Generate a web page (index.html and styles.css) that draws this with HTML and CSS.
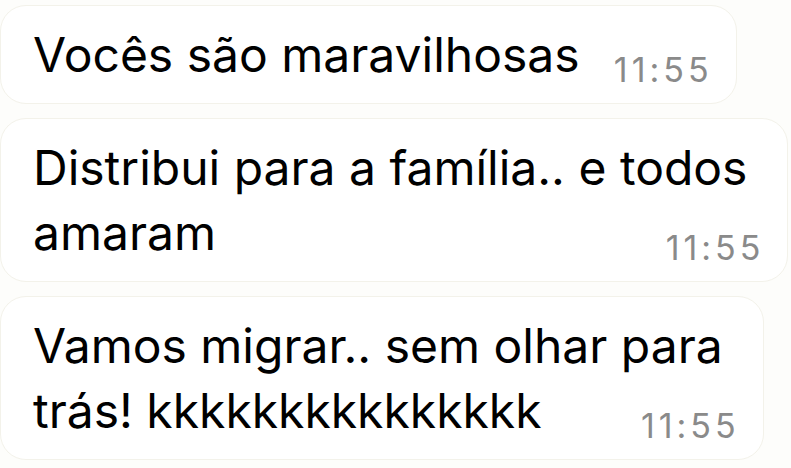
FILE: index.html
```html
<!DOCTYPE html>
<html lang="pt-BR">
<head>
    <meta charset="UTF-8">
    <meta name="viewport" content="width=device-width, initial-scale=1.0">
    <title>Conversa</title>
    <link rel="stylesheet" href="styles.css">
</head>
<body>
    <div class="chat">
        <div class="bubble">
            <p class="text">Vocês são maravilhosas<span class="spacer"></span></p>
            <span class="time">11:55</span>
        </div>
        <div class="bubble">
            <p class="text">Distribui para a família.. e todos<br>amaram<span class="spacer"></span></p>
            <span class="time">11:55</span>
        </div>
        <div class="bubble">
            <p class="text">Vamos migrar.. sem olhar para<br>trás! kkkkkkkkkkkkkkk<span class="spacer"></span></p>
            <span class="time">11:55</span>
        </div>
    </div>
</body>
</html>
```

FILE: styles.css
```css
body {
    margin: 0;
    background-color: #fdfdfb;
    font-family: Inter, "Liberation Sans", Arial, sans-serif;
}
.chat {
    display: flex;
    flex-direction: column;
    align-items: flex-start;
    gap: 14px;
    padding-top: 5px;
}
.bubble {
    display: grid;
    background: #fff;
    border: 1px solid #f3f2ea;
    border-radius: 26px;
    padding: 16px 40px 16px 32px;
}
.text {
    grid-area: 1 / 1;
    margin: 0;
    font-size: 48px;
    line-height: 65px;
    color: #000;
}
.spacer {
    display: inline-block;
    width: 116px;
}
.time {
    grid-area: 1 / 1;
    justify-self: end;
    align-self: end;
    font-size: 34px;
    line-height: 40px;
    letter-spacing: 4px;
    color: #8a8a8a;
    margin-right: -17px;
    margin-bottom: -3px;
}
```
